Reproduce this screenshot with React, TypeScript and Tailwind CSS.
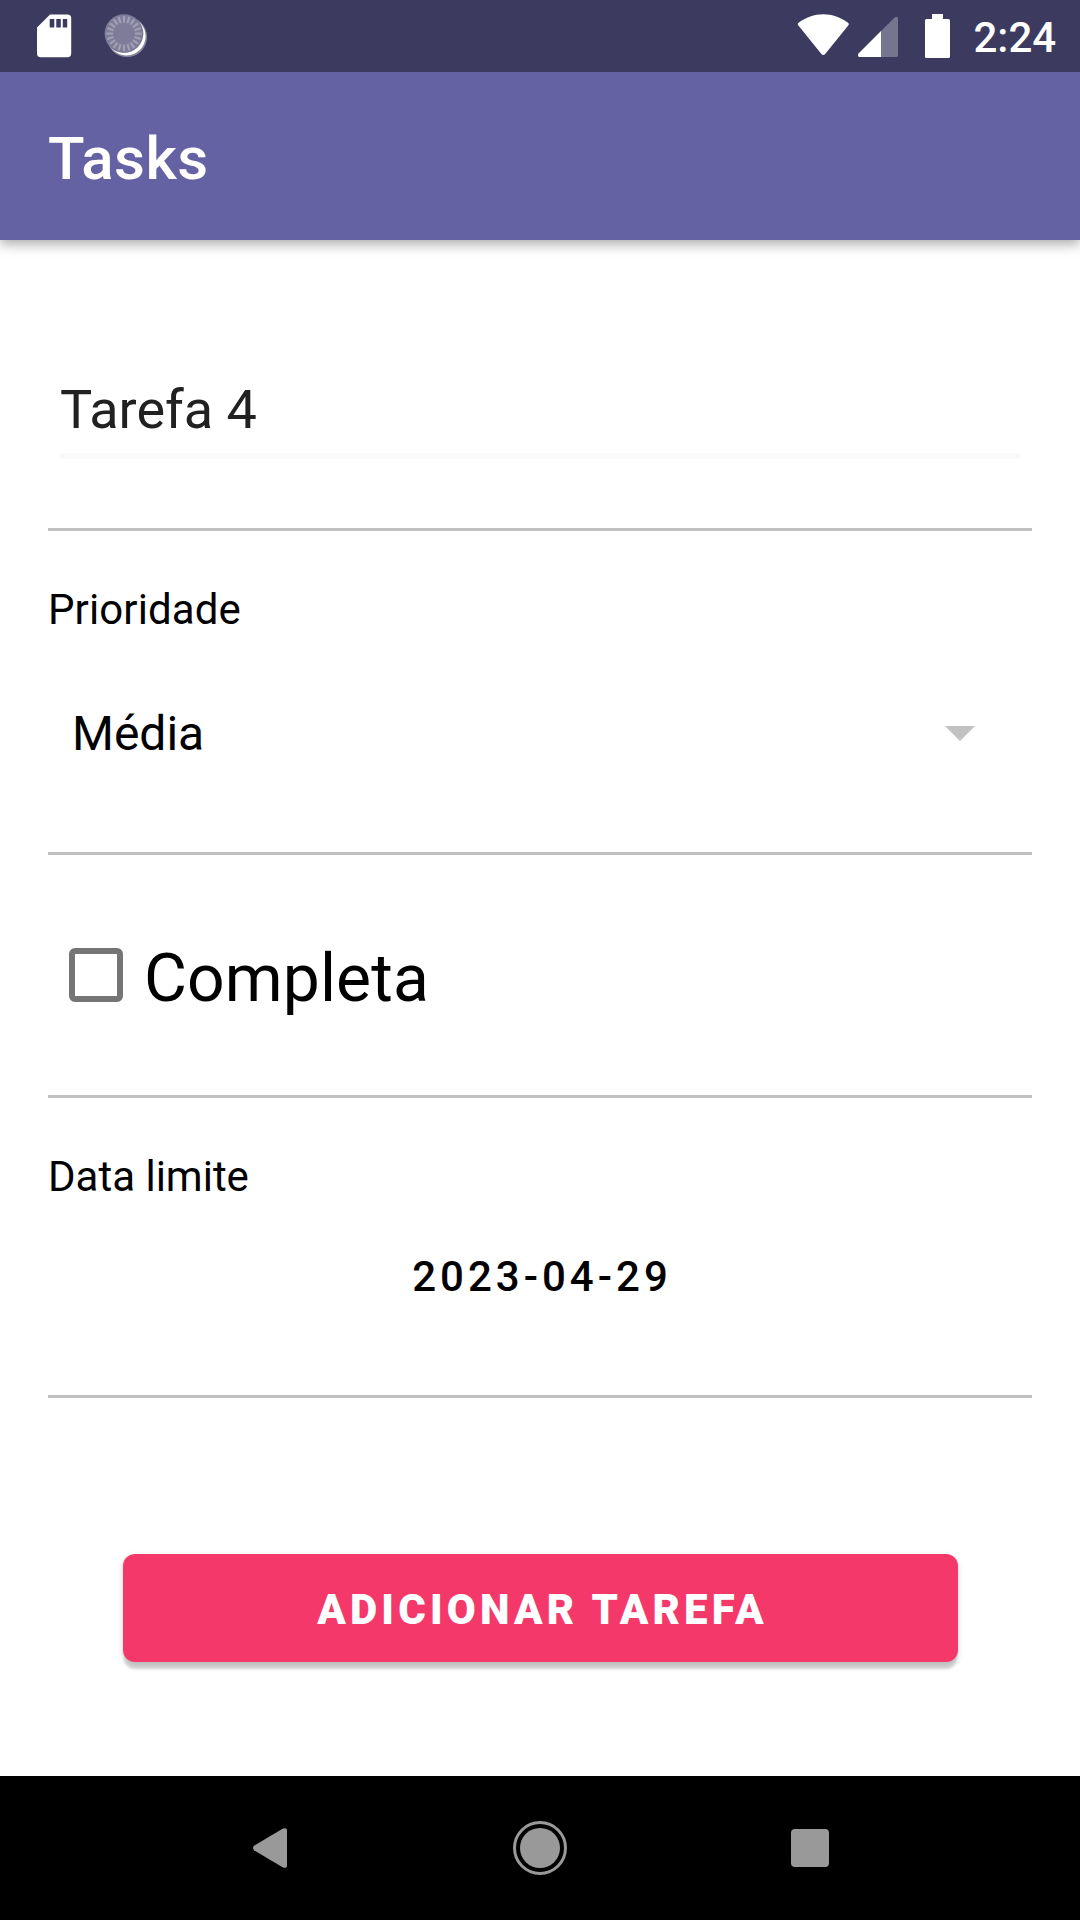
import React from "react";

const TICKS = Array.from({ length: 20 }, (_, i) => i * 18);

function SdCardIcon() {
  return (
    <svg className="h-[72px] w-[36px]" viewBox="36 0 36 72" fill="none">
      <path
        fill="#fff"
        fillRule="evenodd"
        d="M50 14.5H67.5Q71.2 14.5 71.2 18.2V53.6Q71.2 57.3 67.5 57.3H40.7Q37 57.3 37 53.6V27.5ZM49.7 19V27.5H54.3V19ZM56.3 19V27.5H60.8V19ZM62.8 19V27.5H67.2V19Z"
      />
    </svg>
  );
}

function SyncIcon() {
  return (
    <svg className="ml-[32px] h-[72px] w-[44px]" viewBox="104 0 44 72" fill="none">
      <circle cx="127" cy="37" r="20" fill="#fff" fillOpacity="0.4" />
      <circle cx="126.4" cy="36.2" r="19.2" fill="#fff" />
      <circle cx="124" cy="33.6" r="19.4" fill="#7e7c98" />
      {TICKS.map((a) => (
        <path
          key={a}
          d="M124 16V22.6"
          stroke="#a19fb4"
          strokeWidth="2.2"
          transform={`rotate(${a} 124 33.6)`}
        />
      ))}
    </svg>
  );
}

function WifiIcon() {
  return (
    <svg className="h-[72px] w-[52px]" viewBox="797 0 52 72">
      <path
        fill="#fff"
        d="M798.2 25.2Q797.2 23.7 798.6 22.7C805.8 17.3 814.3 14.2 823.3 14.2S840.8 17.3 848 22.7Q849.4 23.7 848.4 25.2L825.4 53.8Q823.3 56.2 821.2 53.8Z"
      />
    </svg>
  );
}

function SignalIcon() {
  return (
    <svg className="ml-[8px] h-[72px] w-[41px]" viewBox="857 0 41 72">
      <path
        fill="#fff"
        fillOpacity="0.3"
        d="M881 31L894.6 17.6Q898 15.6 898 19V55.2Q898 57 896.2 57H881Z"
      />
      <path fill="#fff" d="M881 31V57H859.8Q857 57 858.5 53.6Z" />
    </svg>
  );
}

function BatteryIcon() {
  return (
    <svg className="ml-[26px] h-[72px] w-[26px]" viewBox="924 0 26 72" fill="#fff">
      <rect x="932" y="14" width="11" height="7" />
      <rect x="925" y="19" width="25" height="39" rx="1.6" />
    </svg>
  );
}

function Divider() {
  return <div className="h-[3px] w-full shrink-0 bg-[#c1c1c1]" />;
}

export default function App() {
  return (
    <div className="flex h-[1920px] w-[1080px] flex-col overflow-hidden bg-white font-['Roboto',sans-serif] text-black">
      <div className="z-20 flex h-[72px] shrink-0 justify-between bg-[#3c3a5f] pr-[24px] pl-[36px]">
        <div className="flex">
          <SdCardIcon />
          <SyncIcon />
        </div>
        <div className="flex">
          <WifiIcon />
          <SignalIcon />
          <BatteryIcon />
          <span className="ml-[22px] w-[84px] pt-[13px] pl-[1.5px] text-[42px] leading-[50px] font-medium whitespace-nowrap text-white">
            2:24
          </span>
        </div>
      </div>

      <header className="z-10 flex h-[168px] shrink-0 items-center bg-[#6562a3] px-12 pt-[5px] shadow-[0_4px_12px_rgba(0,0,0,0.34)]">
        <h1 className="text-[60px] leading-[72px] font-medium tracking-[0.5px] text-white">Tasks</h1>
      </header>

      <main className="flex grow flex-col px-12">
        <div className="mx-3 mt-[138px] mb-[69px] h-[81px] shrink-0 border-b-[6px] border-[#fafafa] text-[54px] leading-[64px] text-[#212121]">
          Tarefa 4
        </div>
        <Divider />
        <label className="mt-[54px] text-[42px] leading-[50px] tracking-[0.1px]">Prioridade</label>
        <div className="mt-[69px] mb-[88px] flex h-[60px] shrink-0 justify-between pr-[57px] pl-6">
          <span className="text-[48px] leading-[60px]">Média</span>
          <svg className="mt-[22px] h-[15px] w-[30px]" viewBox="0 0 30 15">
            <path d="M0 0H30L15 15Z" fill="#c1c1c1" />
          </svg>
        </div>
        <Divider />
        <div className="mt-[84px] mb-[78px] flex h-[78px] shrink-0 gap-[21px] pl-[21px]">
          <div className="mt-[9px] size-[54px] rounded-[6px] border-[6px] border-[#757575]" />
          <span className="pt-px text-[66px] leading-[78px] tracking-[0.1px]">Completa</span>
        </div>
        <Divider />
        <label className="mt-[54px] text-[42px] leading-[50px]">Data limite</label>
        <div className="mt-[50px] mb-[93px] pl-[4px] text-center text-[42px] leading-[50px] font-medium tracking-[4px]">
          2023-04-29
        </div>
        <Divider />
        <button className="mt-[156px] mr-[74px] ml-[75px] flex h-[108px] shrink-0 items-center justify-center rounded-[12px] bg-[#f5386a] pt-[3px] pl-[4px] text-[42px] leading-[50px] font-black tracking-[4.15px] text-white shadow-[0_8px_3px_-1px_rgba(0,0,0,0.17),0_2px_6px_rgba(0,0,0,0.15)]">
          ADICIONAR TAREFA
        </button>
      </main>

      <nav className="grid h-[144px] shrink-0 grid-cols-3 place-items-center bg-black px-[135px]">
        <svg className="size-[60px]" viewBox="240 1818 60 60">
          <path
            fill="#999"
            d="M254 1845.8L283 1828.6Q287 1827 287 1831V1865Q287 1869 283 1867.4L254 1850.2Q252 1848 254 1845.8Z"
          />
        </svg>
        <svg className="size-[60px]" viewBox="0 0 60 60">
          <circle cx="30" cy="30" r="25.5" fill="none" stroke="#999" strokeWidth="3" />
          <circle cx="30" cy="30" r="20" fill="#999" />
        </svg>
        <div className="size-[38px] rounded-[4px] bg-[#999]" />
      </nav>
    </div>
  );
}
